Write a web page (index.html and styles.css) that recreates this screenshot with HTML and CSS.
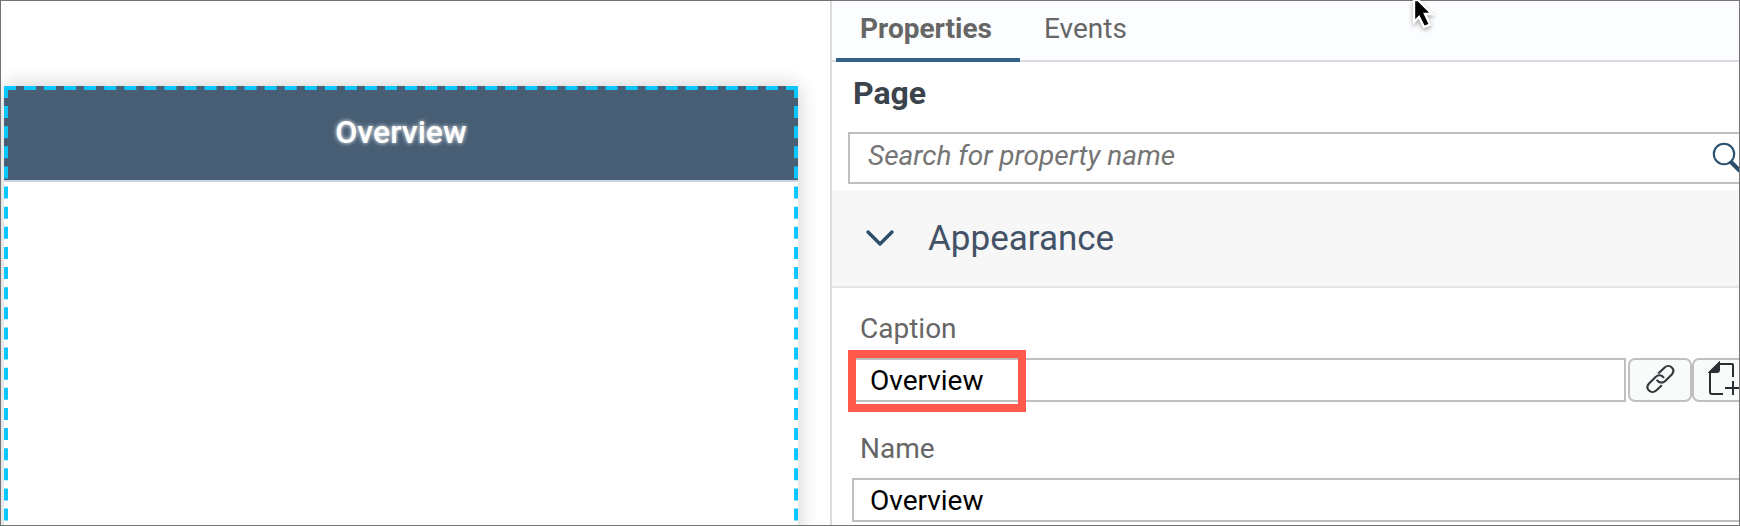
FILE: index.html
```html
<!DOCTYPE html>
<html lang="en">
<head>
<meta charset="utf-8">
<title>Page properties</title>
<link rel="stylesheet" href="styles.css">
</head>
<body>
<div class="app">
  <main class="canvas">
    <section class="page">
      <header class="page-header"><span>Overview</span></header>
      <svg class="selection" width="794" height="460" fill="none" stroke="#0bc6ff" stroke-width="4">
        <path d="M0 2H794" stroke-dasharray="12 8.05"/>
        <path d="M2 0V460M792 0V460" stroke-dasharray="12 8.12"/>
      </svg>
    </section>
  </main>
  <aside class="panel">
    <nav class="tabs">
      <a class="tab active"><span>Properties</span></a>
      <a class="tab"><span>Events</span></a>
    </nav>
    <h1 class="title"><span>Page</span></h1>
    <div class="search">
      <span>Search for property name</span>
      <svg class="search-icon" width="30" height="32" viewBox="0 0 30 32" fill="none" stroke="#2b506f"><circle cx="13" cy="13" r="10.2" stroke-width="2.1"/><path d="M19.5 20.5L29 30" stroke-width="4.2"/></svg>
    </div>
    <div class="group">
      <svg width="32" height="20" viewBox="0 0 32 20" fill="none" stroke="#2b506f" stroke-width="3.4" stroke-linecap="round" stroke-linejoin="round"><path d="M4 4L16 16L28 4"/></svg>
      <span>Appearance</span>
    </div>
    <label class="label caption-label"><span>Caption</span></label>
    <div class="row">
      <div class="input"><span>Overview</span><i class="highlight"></i></div>
      <button class="btn link"><svg width="30" height="32" viewBox="0 0 30 32" fill="none" stroke="#32363a" stroke-width="2.1" stroke-linecap="butt"><path d="M13.2 10.6L19.7 4.4C22 2.3 25 2.6 26.8 4.4C28.7 6.3 28.9 9.1 26.8 11.5L20.2 18C17.7 20.4 13.7 20.2 11.7 16.8"/><path d="M16.8 22.2L11.2 27.5C8.8 29.6 5.8 29.4 4 27.6C2.1 25.7 2 22.8 4 20.5L10.6 13.9C13.2 11.5 17 11.6 19 15"/></svg></button>
      <button class="btn add"><svg width="32" height="36" viewBox="0 0 32 36" fill="none" stroke="#2b2f33" stroke-width="2"><path d="M15 33H4Q2 33 2 31V11L11 3H24Q25 3 25 4V16"/><path d="M2 11L11 2V9Q11 11 9 11Z" fill="#2b2f33"/><path d="M17 27H32M25 20V34"/></svg></button>
    </div>
    <label class="label name-label"><span>Name</span></label>
    <div class="input name-input"><span>Overview</span></div>
  </aside>
  <div class="frame"></div>
  <svg class="pointer" width="36" height="30" viewBox="0 0 36 30"><path d="M6 0V22L11 17L16 27L22 24.5L17 14H24L10 0Z" fill="#000" stroke="#fff" stroke-width="2.4"/></svg>
</div>
</body>
</html>
```
FILE: styles.css
```css
* { box-sizing: border-box; }
body { margin: 0; font-family: Roboto, "Liberation Sans", sans-serif; font-size: 28px; background: #fff; }
.app { position: relative; display: flex; width: 1740px; height: 526px; overflow: hidden; }
.canvas { width: 830px; height: 526px; padding: 86px 0 0 4px; overflow: hidden; flex: none; }
.page { position: relative; width: 794px; height: 460px; box-shadow: 0 0 20px rgba(0,0,0,.2); background: #fff; }
.page-header { height: 96px; padding-bottom: 2px; display: flex; align-items: center; justify-content: center; background: #475e75; border-bottom: 2px solid #c7d5e6; color: #fff; font-size: 32px; font-weight: 500; text-shadow: 0 0 4px #fff; }
.selection { position: absolute; left: 0; top: 0; }
.panel { width: 910px; height: 526px; flex: none; display: flex; flex-direction: column; border-left: 2px solid #dadadf; overflow: hidden; }
.tabs { height: 62px; flex: none; display: flex; padding-left: 4px; border-bottom: 2px solid #d9dadd; background: #fcfdff; color: #666; }
.tab { height: 62px; line-height: 57px; padding-left: 24px; width: 184px; }
.active { font-weight: 700; border-bottom: 4px solid #346187; }
.title { height: 70px; flex: none; margin: 0; padding-left: 21px; line-height: 63px; font-size: 32px; color: #3b444c; }
.search { width: 910px; height: 52px; flex: none; margin-left: 16px; padding-left: 18px; line-height: 44px; border: 2px solid #bfbfbf; display: flex; color: #757575; font-style: italic; }
.search span { width: 843px; }
.search-icon { margin-top: 7px; flex: none; }
.group { height: 98px; flex: none; margin-top: 6px; padding-left: 32px; display: flex; align-items: center; gap: 32px; background: #f7f7f7; border-bottom: 2px solid #e5e5e5; color: #435266; font-size: 35px; }
.label { height: 70px; flex: none; padding-left: 28px; line-height: 81px; color: #666; }
.name-label { height: 76px; line-height: 93px; }
.row { height: 44px; flex: none; display: flex; padding-left: 20px; width: 1000px; }
.input { position: relative; width: 774px; height: 44px; flex: none; padding-left: 16px; line-height: 41px; border: 2px solid #bfbfbf; background: #fff; color: #000; }
.name-input { width: 920px; margin-left: 20px; }
.highlight { position: absolute; left: -6px; top: -10px; width: 178px; height: 62px; border: 8px solid #ff5a4c; }
.btn { height: 44px; width: 64px; padding: 0; flex: none; border: 2px solid #bfbfbf; border-radius: 7px; background: #f9fafa; display: flex; }
.link { margin-left: 2px; padding: 3px 0 0 15px; }
.add { padding: 1px 0 0 14px; }
.frame { position: absolute; inset: 0; border: 1px solid #747476; }
.pointer { position: absolute; left: 1408px; top: 0; filter: drop-shadow(0 2px 2px rgba(0,0,0,.35)); }
```
